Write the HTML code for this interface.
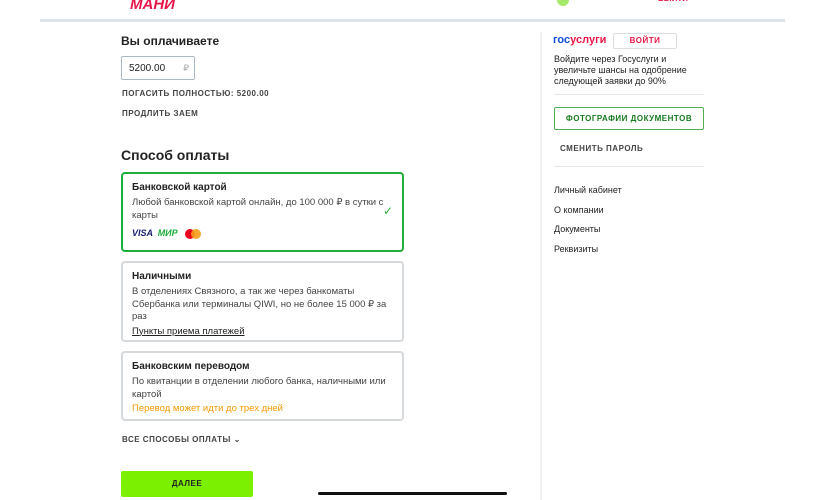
<!DOCTYPE html><html><head><meta charset="utf-8"><style>
*{margin:0;padding:0;box-sizing:border-box}
body{width:825px;height:500px;overflow:hidden;background:#fff;font-family:"Liberation Sans",sans-serif;color:#222;position:relative}
.a{position:absolute}
.sm{font-size:8px;letter-spacing:.5px;color:#444;font-weight:bold}
.card{position:absolute;left:121px;width:283px;border:2px solid #d6d9db;border-radius:4px;padding:8px 9px}
.card b{font-size:10px;display:block;margin-bottom:4px}
.card p{font-size:9.5px;line-height:12.5px;color:#444}
</style></head><body>
<div class="a" style="left:130px;top:-4px;font-size:15px;font-weight:900;font-style:italic;color:#e8174a">МАНИ</div>
<div class="a" style="left:557px;top:-6px;width:12px;height:12px;border-radius:50%;background:#a5e86a"></div>
<div class="a" style="left:658px;top:-6px;font-size:8px;color:#e8174a;font-weight:bold">ВЫЙТИ</div>
<div class="a" style="left:40px;top:19px;width:745px;height:3px;background:#dbe5ea"></div>
<div class="a" style="left:540px;top:32px;width:2px;height:468px;background:#f0f0f0"></div>
<div class="a" style="left:121px;top:34px;font-size:12px;font-weight:bold">Вы оплачиваете</div>
<div class="a" style="left:121px;top:56px;width:74px;height:24px;border:1px solid #a8b8c4;border-radius:2px;font-size:10px;padding:6px 7px">5200.00<span style="position:absolute;right:5px;color:#aaa;font-size:9px">₽</span></div>
<div class="a sm" style="left:122px;top:89px">ПОГАСИТЬ ПОЛНОСТЬЮ: 5200.00</div>
<div class="a sm" style="left:122px;top:109px">ПРОДЛИТЬ ЗАЕМ</div>
<div class="a" style="left:121px;top:147px;font-size:14px;font-weight:bold">Способ оплаты</div>
<div class="card" style="top:172px;height:80px;border-color:#1fae3a">
<b>Банковской картой</b><p>Любой банковской картой онлайн, до 100 000 ₽ в сутки с карты</p>
<div style="margin-top:6px;font-size:9px;font-weight:900;font-style:italic"><span style="color:#1a1f71">VISA</span> &nbsp;<span style="color:#1fae3a">МИР</span> &nbsp;&nbsp;<span style="display:inline-block;width:10px;height:10px;border-radius:50%;background:#eb001b;vertical-align:middle"></span><span style="display:inline-block;width:10px;height:10px;border-radius:50%;background:#f79e1b;margin-left:-4px;vertical-align:middle;opacity:.9"></span></div>
<span style="position:absolute;right:9px;top:30px;color:#1fae3a;font-size:12px">✓</span></div>
<div class="card" style="top:261px;height:81px"><b>Наличными</b><p>В отделениях Связного, а так же через банкоматы Сбербанка или терминалы QIWI, но не более 15 000 ₽ за раз</p><p style="text-decoration:underline;color:#222;margin-top:2px">Пункты приема платежей</p></div>
<div class="card" style="top:351px;height:70px"><b>Банковским переводом</b><p>По квитанции в отделении любого банка, наличными или картой</p><p style="color:#f29a00;margin-top:2px">Перевод может идти до трех дней</p></div>
<div class="a sm" style="left:122px;top:435px">ВСЕ СПОСОБЫ ОПЛАТЫ ⌄</div>
<div class="a" style="left:121px;top:471px;width:132px;height:26px;background:#7bf000;border-radius:2px;font-size:8px;font-weight:bold;letter-spacing:.5px;text-align:center;line-height:26px">ДАЛЕЕ</div>
<div class="a" style="left:318px;top:492px;width:189px;height:3px;background:#111;border-radius:2px"></div>
<div class="a" style="left:553px;top:34px;font-size:11px;font-weight:bold"><span style="color:#0d4cd3">гос</span><span style="color:#e8174a">услуги</span></div>
<div class="a" style="left:613px;top:33px;width:64px;height:16px;border:1px solid #ddd;border-radius:2px;font-size:8px;font-weight:bold;letter-spacing:.5px;color:#e8174a;text-align:center;line-height:14px">ВОЙТИ</div>
<div class="a" style="left:554px;top:54px;font-size:9px;line-height:11px;color:#222">Войдите через Госуслуги и<br>увеличьте шансы на одобрение<br>следующей заявки до 90%</div>
<div class="a" style="left:554px;top:94px;width:150px;height:1px;background:#e6e6e6"></div>
<div class="a" style="left:554px;top:107px;width:150px;height:23px;border:1px solid #4fae54;border-radius:2px;font-size:8px;font-weight:bold;letter-spacing:.5px;color:#187a1f;text-align:center;line-height:21px">ФОТОГРАФИИ ДОКУМЕНТОВ</div>
<div class="a sm" style="left:560px;top:144px">СМЕНИТЬ ПАРОЛЬ</div>
<div class="a" style="left:554px;top:166px;width:150px;height:1px;background:#e6e6e6"></div>
<div class="a" style="left:554px;top:181px;font-size:9px;line-height:19.7px">Личный кабинет<br>О компании<br>Документы<br>Реквизиты</div>
</body></html>
